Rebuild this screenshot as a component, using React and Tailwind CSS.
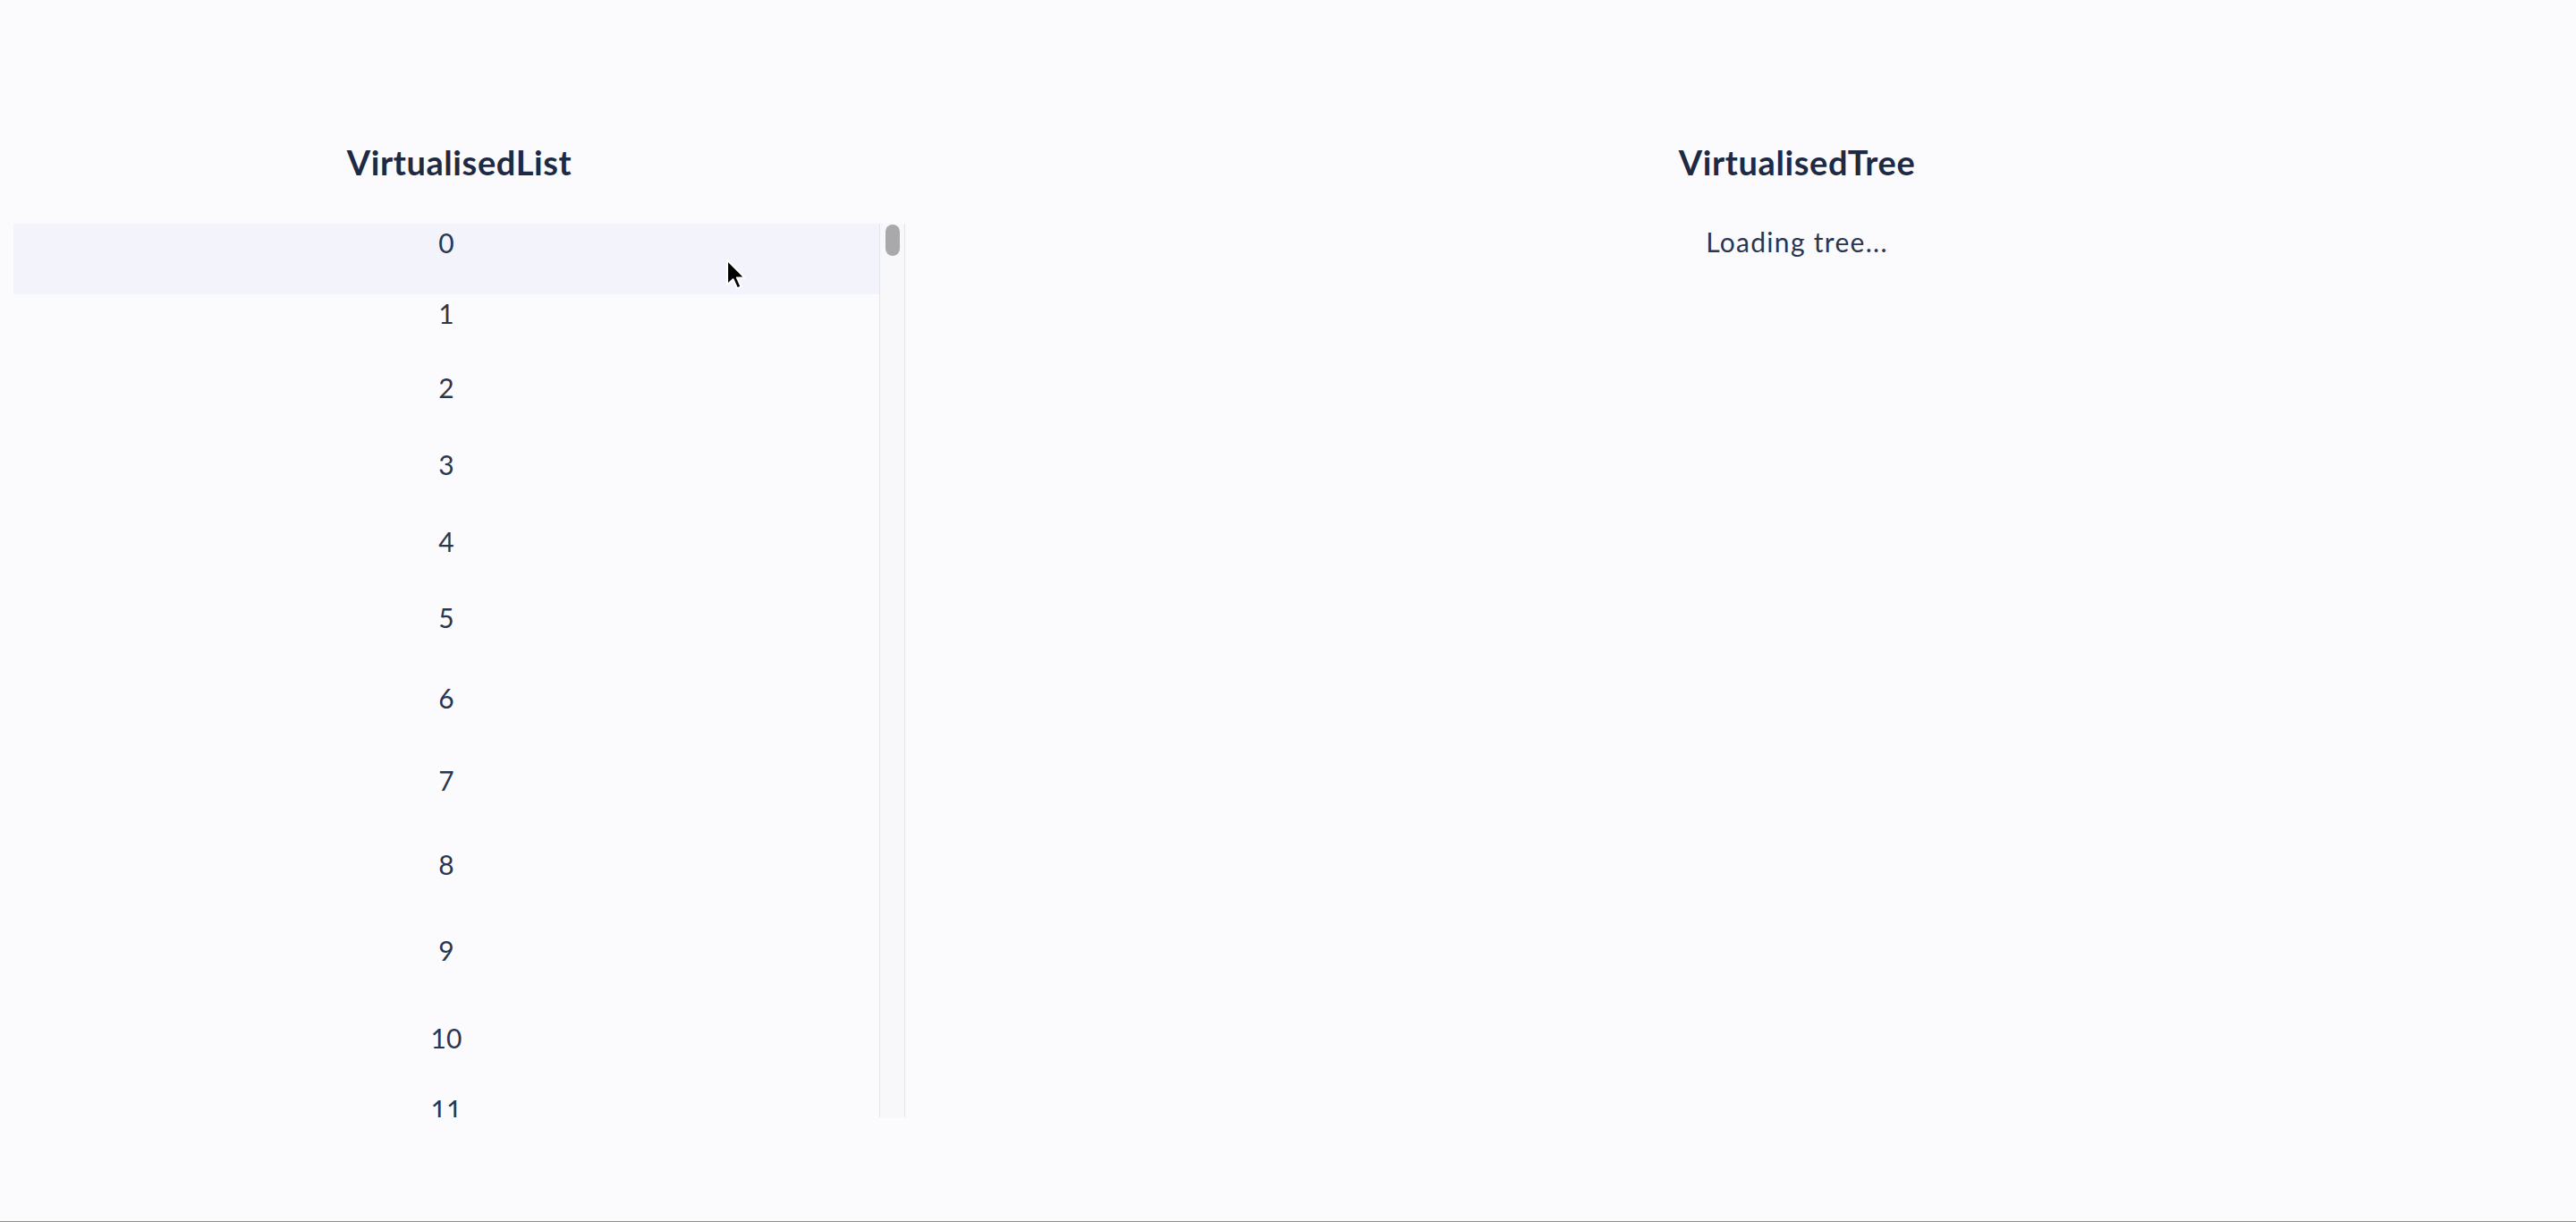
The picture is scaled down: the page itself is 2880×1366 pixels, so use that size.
import React from 'react';

// heights of the rows that are rendered (variable size list)
const rowHeights = [79, 83, 86, 86, 85, 90, 92, 94, 96, 98, 80, 84];

const Cursor = () => (
  <svg
    className="absolute left-[811px] top-[289px] pointer-events-none"
    width="24"
    height="36"
    viewBox="0 0 13 20"
  >
    <path
      d="M1 1 L1 16.2 L4.6 12.9 L7.2 18.6 L9.6 17.5 L7 11.9 L11.8 11.9 Z"
      fill="#000"
      stroke="#fff"
      strokeWidth="1.1"
      strokeLinejoin="round"
    />
  </svg>
);

const VirtualisedList = () => {
  return (
    <div className="flex h-[999px] w-full overflow-hidden">
      <div className="flex-1 overflow-hidden">
        {rowHeights.map((h, i) => (
          <div
            key={i}
            className={`text-center text-[30px] font-normal leading-none pt-[6px] text-[#2a3650] ${i === 0 ? 'bg-[#f2f3fb]' : ''}`}
            style={{ height: h }}
          >
            {i}
          </div>
        ))}
      </div>
      <div className="w-[29px] shrink-0 border-x border-[#e6e6e9] bg-[#f8f8fb] px-[6px] pt-[1px]">
        <div className="h-[35px] w-[16px] rounded-full bg-[#a9a9ab]" />
      </div>
    </div>
  );
};

export default function App() {
  return (
    <div className="relative h-[1366px] w-full overflow-hidden border-b border-[#8d8d8d] bg-[#fbfbfe] font-['Lato','Noto_Sans',sans-serif]">
      <div className="flex px-[15px] pt-[162px]">
        <section className="flex w-[997px] shrink-0 flex-col items-center">
          <h2 className="text-[38px] font-bold leading-none tracking-[0.6px] text-[#1e2a44]">VirtualisedList</h2>
          <div className="mt-[50px] w-full">
            <VirtualisedList />
          </div>
        </section>
        <section className="flex flex-1 flex-col items-center pl-[141px]">
          <h2 className="text-[38px] font-bold leading-none tracking-[0.6px] text-[#1e2a44]">VirtualisedTree</h2>
          <div className="mt-[50px] pt-[5px] text-[30px] font-normal leading-none tracking-[1.3px] text-[#2a3650]">Loading tree...</div>
        </section>
      </div>
      <Cursor />
    </div>
  );
}
